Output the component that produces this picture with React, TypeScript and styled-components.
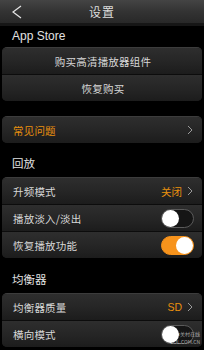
import React from 'react';
import styled, { createGlobalStyle } from 'styled-components';

const GlobalStyle = createGlobalStyle`
  html, body {
    margin: 0;
    padding: 0;
    background: #000;
  }
  body {
    font-family: "Noto Sans CJK SC", "Liberation Sans", sans-serif;
    -webkit-font-smoothing: antialiased;
  }
`;

const Page = styled.div`
  width: 204px;
  height: 350px;
  overflow: hidden;
  background: #000;
  position: relative;
`;

const Header = styled.div`
  height: 23px;
  display: flex;
  align-items: center;
  justify-content: center;
  position: relative;
  background: linear-gradient(#444 0%, #333 50%, #282828 100%);
  border-bottom: 3px solid #161616;
`;

const BackButton = styled.div`
  position: absolute;
  left: 10px;
  top: 5px;
  width: 14px;
  height: 14px;
  display: flex;
`;

const Title = styled.div`
  color: #ddd;
  font-size: 12px;
  letter-spacing: 1px;
`;

const SectionLabel = styled.div<{ $top: number; $bottom: number; $latin?: boolean }>`
  color: #e2e2e2;
  font-family: ${({ $latin }) => ($latin ? '"Liberation Sans", sans-serif' : '"Noto Sans CJK SC", sans-serif')};
  font-size: ${({ $latin }) => ($latin ? '12px' : '11.5px')};
  padding: ${({ $top, $bottom }) => `${$top}px 12px ${$bottom}px`};
  line-height: 14px;
`;

const Group = styled.div`
  margin: 0 2px;
  border-radius: 5px;
  overflow: hidden;
  background: #202020;
  border-top: 1px solid #3c3c3c;
  box-shadow: inset 0 0 0 1px #141414;
`;

const Spacer = styled.div<{ $h: number }>`
  height: ${({ $h }) => $h}px;
`;

const Row = styled.div<{ $center?: boolean }>`
  height: 26px;
  display: flex;
  align-items: center;
  justify-content: ${({ $center }) => ($center ? 'center' : 'space-between')};
  padding: 0 9px 0 11px;
  background: linear-gradient(#2e2e2e 0%, #252525 55%, #1c1c1c 100%);
  & + & {
    border-top: 1px solid #0c0c0c;
  }
`;

const RowText = styled.span<{ $accent?: boolean }>`
  color: ${({ $accent }) => ($accent ? '#e8900e' : '#d8d8d8')};
  font-size: 10.5px;
  letter-spacing: 0.2px;
`;

const Trailing = styled.div`
  display: flex;
  align-items: center;
  gap: 5px;
`;

const Value = styled.span<{ $latin?: boolean }>`
  color: #e8900e;
  font-size: 10.5px;
  font-family: ${({ $latin }) => ($latin ? '"Liberation Sans", sans-serif' : 'inherit')};
`;

const Switch = styled.div<{ $on: boolean }>`
  width: 33px;
  height: 19px;
  box-sizing: border-box;
  border-radius: 10px;
  position: relative;
  margin-right: -1px;
  background: ${({ $on }) => ($on ? '#f7931c' : '#151515')};
  border: 1px solid ${({ $on }) => ($on ? '#f7931c' : '#5a5a5a')};
`;

const Knob = styled.div<{ $on: boolean }>`
  position: absolute;
  top: 0px;
  ${({ $on }) => ($on ? 'right: 0px;' : 'left: 0px;')}
  width: 17px;
  height: 17px;
  border-radius: 50%;
  background: #fff;
`;

const Watermark = styled.div`
  position: absolute;
  right: 4px;
  bottom: 4px;
  text-align: right;
  color: rgba(255, 255, 255, 0.6);
  font-size: 5px;
  line-height: 8px;
  white-space: nowrap;
`;

const Chevron = () => (
  <svg width="6" height="10" viewBox="0 0 6 10">
    <path d="M1 1 L5 5 L1 9" fill="none" stroke="#9a9a9a" strokeWidth="1" />
  </svg>
);

const App = () => (
  <Page>
    <GlobalStyle />
    <Header>
      <BackButton>
        <svg width="14" height="14" viewBox="0 0 14 14">
          <path d="M11 1 L3 7 L11 13" fill="none" stroke="#e6e6e6" strokeWidth="1.2" />
        </svg>
      </BackButton>
      <Title>设置</Title>
    </Header>

    <SectionLabel $latin $top={3} $bottom={4}>
      App Store
    </SectionLabel>
    <Group>
      <Row $center>
        <RowText>购买高清播放器组件</RowText>
      </Row>
      <Row $center>
        <RowText>恢复购买</RowText>
      </Row>
    </Group>

    <Spacer $h={15} />
    <Group>
      <Row>
        <RowText $accent>常见问题</RowText>
        <Chevron />
      </Row>
    </Group>

    <SectionLabel $top={13} $bottom={7}>
      回放
    </SectionLabel>
    <Group>
      <Row>
        <RowText>升频模式</RowText>
        <Trailing>
          <Value>关闭</Value>
          <Chevron />
        </Trailing>
      </Row>
      <Row>
        <RowText>播放淡入/淡出</RowText>
        <Switch $on={false}>
          <Knob $on={false} />
        </Switch>
      </Row>
      <Row>
        <RowText>恢复播放功能</RowText>
        <Switch $on>
          <Knob $on />
        </Switch>
      </Row>
    </Group>

    <SectionLabel $top={14} $bottom={7}>
      均衡器
    </SectionLabel>
    <Group>
      <Row>
        <RowText>均衡器质量</RowText>
        <Trailing>
          <Value $latin>SD</Value>
          <Chevron />
        </Trailing>
      </Row>
      <Row>
        <RowText>横向模式</RowText>
        <Switch $on={false}>
          <Knob $on={false} />
        </Switch>
      </Row>
    </Group>

    <Watermark>
      中关村在线
      <br />
      ZOL.COM.CN
    </Watermark>
  </Page>
);

export default App;
